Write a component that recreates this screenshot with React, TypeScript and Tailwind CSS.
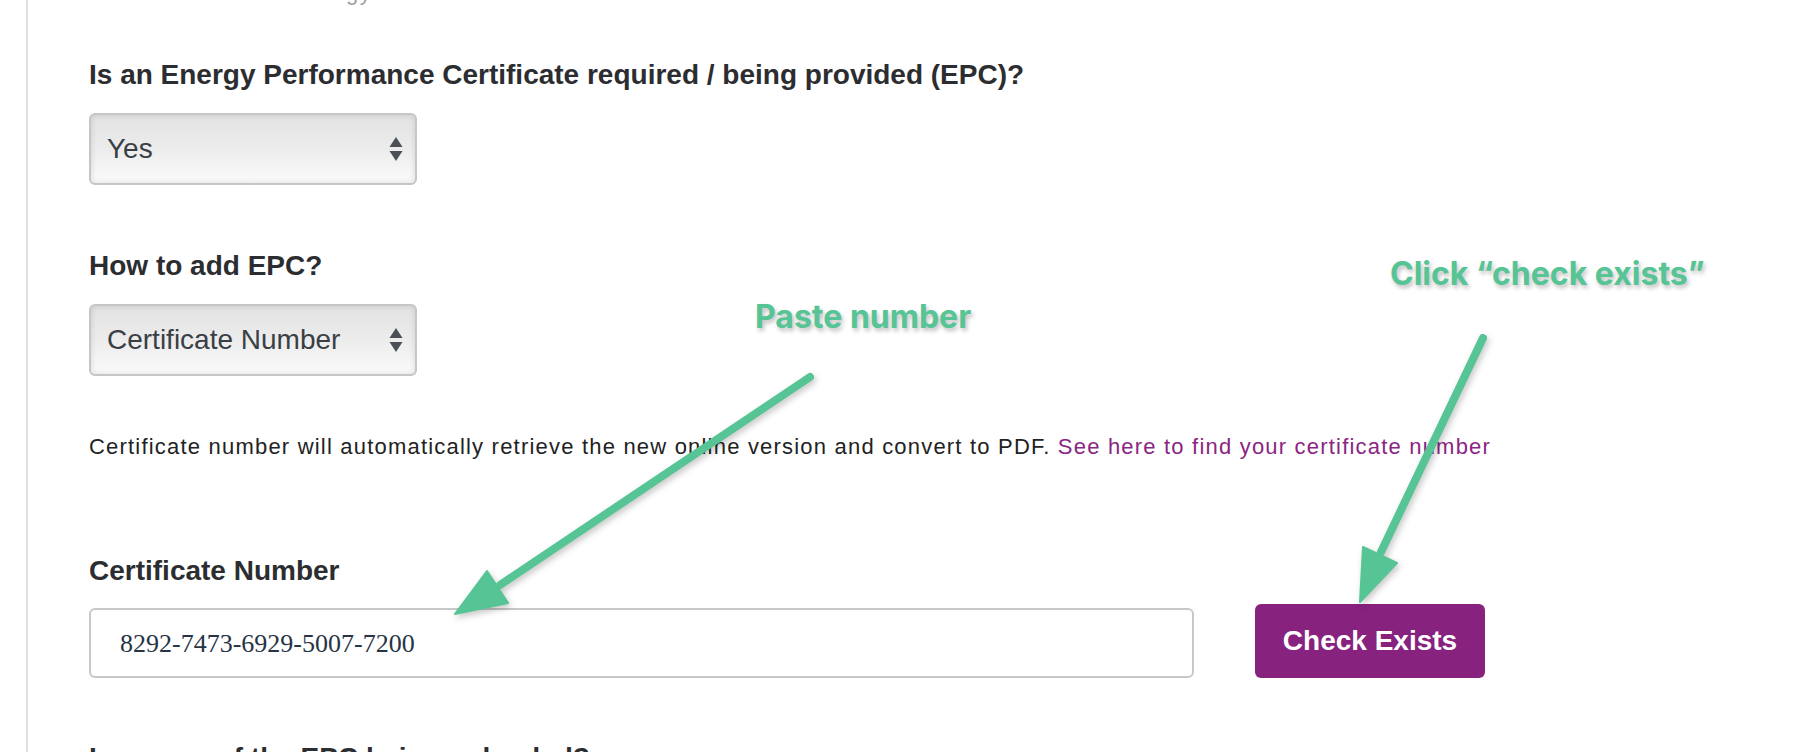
import React from 'react';

const sans = "font-['Liberation_Sans',Arial,Helvetica,sans-serif]";

function SelectBox({ value }: { value: string }) {
  return (
    <div className="mt-[22px] flex h-[72px] w-[328px] items-center justify-between rounded-[6px] border-2 border-[#c6c6c6] bg-linear-to-b from-[#e3e3e3] via-[#ececec] to-[#fbfbfb] pl-[16px] pr-[12px] shadow-[inset_0_0_6px_rgba(0,0,0,0.12)]">
      <span className="text-[28px] leading-[32px] text-[#3a3f45]">{value}</span>
      <svg width="14" height="25" viewBox="0 0 14 25" className="text-[#4b5056]">
        <path d="M7 0 L13.5 10 L0.5 10 Z" fill="currentColor" />
        <path d="M0.5 14 L13.5 14 L7 24 Z" fill="currentColor" />
      </svg>
    </div>
  );
}

function Annotations() {
  return (
    <>
      <svg
        className="pointer-events-none absolute left-0 top-0 drop-shadow-[2px_3px_3px_rgba(0,0,0,0.22)]"
        width="1816"
        height="752"
        viewBox="0 0 1816 752"
      >
        <g stroke="#56c495" strokeWidth={8} strokeLinecap="round" fill="#56c495">
          <line x1="810" y1="377" x2="500" y2="585" />
          <polygon points="455,614 487,571 508,603" strokeWidth={2} strokeLinejoin="round" />
          <line x1="1483" y1="338" x2="1381" y2="552" />
          <polygon points="1360,602 1363,547 1397,563" strokeWidth={2} strokeLinejoin="round" />
        </g>
      </svg>
      <div className="pointer-events-none absolute left-[755px] top-[301px] font-['Inter',sans-serif] text-[32px] font-bold leading-[32px] text-[#56c495] [text-shadow:2px_3px_4px_rgba(0,0,0,0.25)]">
        Paste number
      </div>
      <div className="pointer-events-none absolute left-[1390px] top-[258px] font-['Inter',sans-serif] text-[32px] font-bold leading-[32px] text-[#56c495] [text-shadow:2px_3px_4px_rgba(0,0,0,0.25)]">
        Click “check exists”
      </div>
    </>
  );
}

export default function App() {
  return (
    <div className={`relative h-[752px] w-[1816px] overflow-hidden bg-white ${sans}`}>
      <div className="min-h-[752px] pl-[26px]">
        <div className="flex min-h-[752px] flex-col items-start border-l-2 border-[#e0e0e0] pl-[61px]">
          <p className="-mt-[23px] shrink-0 text-[22px] leading-[32px] tracking-[1.4px] text-[#a0a0a0]">
            Select whether an energy certificate is to be attached.
          </p>

          <h3 className="mt-[50px] text-[28px] font-bold leading-[32px] text-[#2b2d30]">
            Is an Energy Performance Certificate required / being provided (EPC)?
          </h3>
          <SelectBox value="Yes" />

          <h3 className="mt-[65px] text-[28px] font-bold leading-[32px] text-[#2b2d30]">
            How to add EPC?
          </h3>
          <SelectBox value="Certificate Number" />

          <p className="mt-[55px] text-[22px] leading-[32px] tracking-[1.2px] text-[#222]">
            Certificate number will automatically retrieve the new online version and convert to PDF.{' '}
            <a className="text-[#8a2583]">See here to find your certificate number</a>
          </p>

          <h3 className="mt-[92px] text-[28px] font-bold leading-[32px] text-[#2b2d30]">
            Certificate Number
          </h3>
          <div className="mt-[17px] flex items-end gap-[61px]">
            <div className="flex h-[70px] w-[1105px] items-center rounded-[6px] border-2 border-[#c8c8c8] bg-white pl-[29px]">
              <span className="font-['Liberation_Serif','Times_New_Roman',serif] text-[26px] text-[#263445]">
                8292-7473-6929-5007-7200
              </span>
            </div>
            <button className="h-[74px] w-[230px] rounded-[6px] bg-[#88227f] text-[28px] font-bold text-white">
              Check Exists
            </button>
          </div>

          <h3 className="mt-[64px] text-[28px] font-bold leading-[32px] text-[#2b2d30]">
            Is a copy of the EPC being uploaded?
          </h3>
        </div>
      </div>
      <Annotations />
    </div>
  );
}
